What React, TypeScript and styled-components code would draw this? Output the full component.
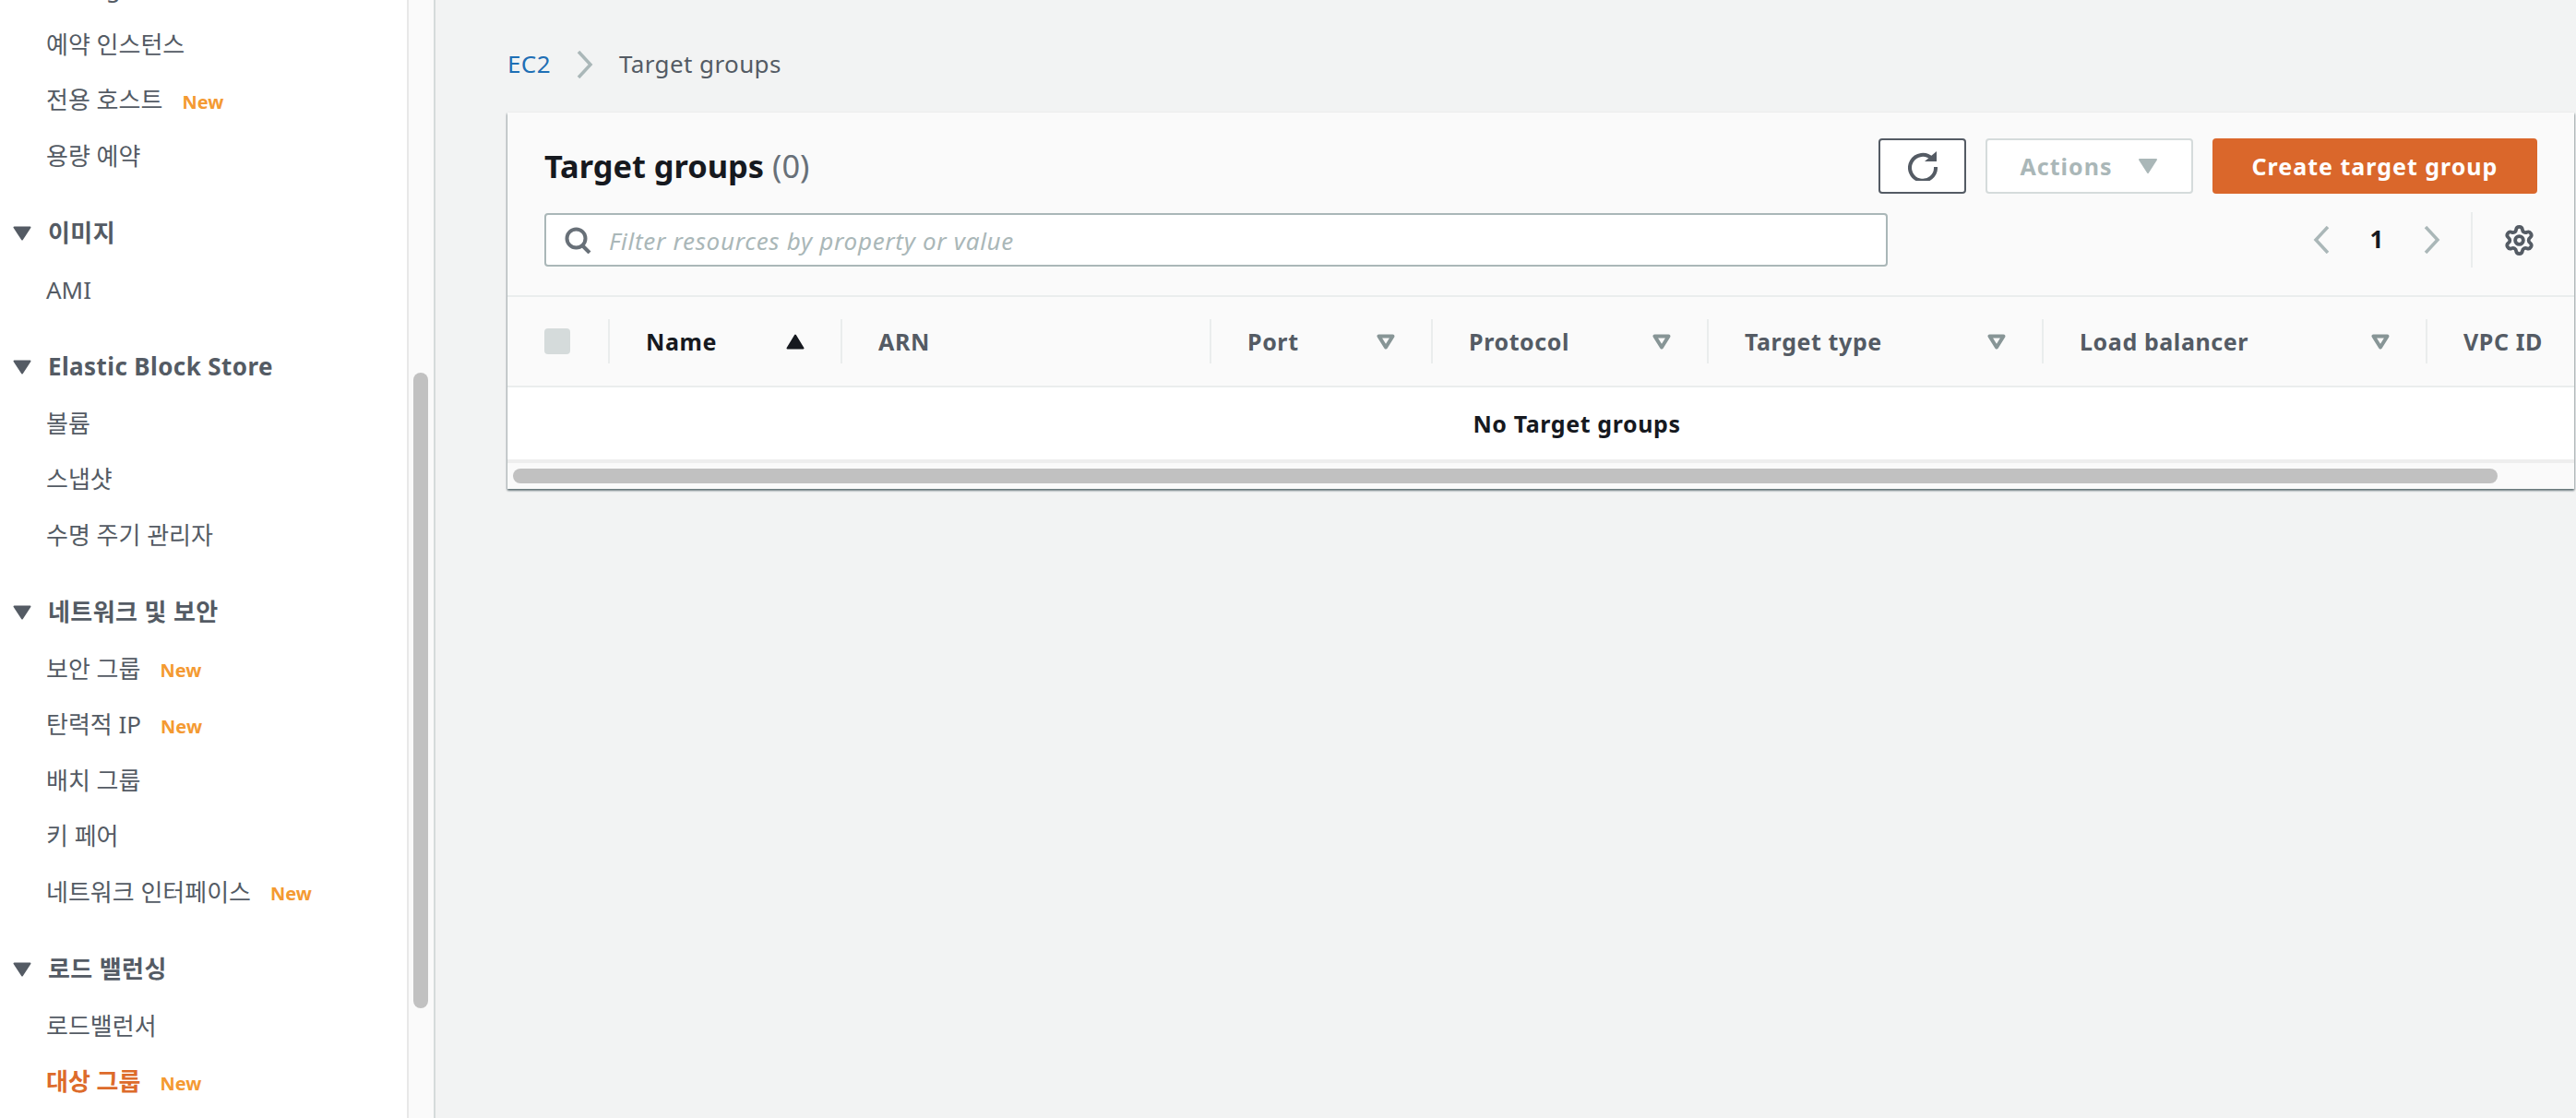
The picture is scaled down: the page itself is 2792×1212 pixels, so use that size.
import styled, { createGlobalStyle } from 'styled-components'
import { Settings } from 'lucide-react'

const GlobalStyle = createGlobalStyle`
  html, body {
    margin: 0;
    padding: 0;
    height: 100%;
    overflow: hidden;
    background: #f2f3f3;
  }
  #root {
    height: 100%;
  }
  * {
    box-sizing: border-box;
  }
`

const FONT = `"Noto Sans", "Noto Sans CJK KR", sans-serif`

const Page = styled.div`
  display: flex;
  height: 100vh;
  font-family: ${FONT};
  font-size: 25px;
  line-height: 1.2;
  color: #545b64;
`

const Sidebar = styled.nav`
  width: 441px;
  flex: none;
  background: #fff;
  overflow: hidden;
`

const NavList = styled.div`
  margin-top: -42.5px;
`

const NavItem = styled.div<{ $active?: boolean }>`
  display: flex;
  align-items: center;
  gap: 21px;
  height: 60.6px;
  padding-left: 50px;
  font-size: 26px;
  white-space: nowrap;
  color: ${({ $active }) => ($active ? '#dd6b2b' : '#545b64')};
  font-weight: ${({ $active }) => ($active ? 700 : 400)};
`

const NavTitle = styled.div`
  display: flex;
  align-items: center;
  gap: 18px;
  height: 62px;
  margin-top: 22.2px;
  padding-left: 14px;
  font-size: 26px;
  font-weight: 700;
  letter-spacing: 0.4px;
  white-space: nowrap;
`

const NewBadge = styled.span`
  font-size: 20px;
  font-weight: 700;
  color: #f49a32;
  margin-top: 4px;
`

const SidebarTrack = styled.div`
  width: 31px;
  flex: none;
  padding: 404px 6px 0 5px;
  background: #fafafa;
  border-left: 2px solid #e8e8e8;
  border-right: 2px solid #d5dbdb;
`

const SidebarThumb = styled.div`
  height: 689px;
  border-radius: 8px;
  background: #c1c1c1;
`

const Main = styled.main`
  flex: 1;
  min-width: 0;
  padding: 46px 2px 0 78px;
`

const Breadcrumb = styled.div`
  display: flex;
  align-items: center;
  height: 48px;
  margin-bottom: 28px;
  font-size: 26px;
  letter-spacing: 0.4px;
`

const CrumbLink = styled.span`
  color: #1f6fb5;
`

const CrumbChevron = styled.svg`
  width: 18px;
  height: 30px;
  margin: 0 28px;
`

const Panel = styled.section`
  background: #fafafa;
  box-shadow: 0 2px 2px 0 rgba(0, 28, 36, 0.45), 1px 1px 2px 0 rgba(0, 28, 36, 0.2),
    -1px 1px 2px 0 rgba(0, 28, 36, 0.2);
`

const PanelHeader = styled.div`
  display: flex;
  flex-direction: column;
  gap: 20px;
  padding: 28px 40px 30px;
`

const HeaderRow = styled.div`
  display: flex;
  align-items: center;
  justify-content: space-between;
`

const Title = styled.h1`
  margin: 0;
  font-size: 34.4px;
  font-weight: 700;
  color: #16191f;

  span {
    font-weight: 400;
    color: #687078;
  }
`

const Actions = styled.div`
  display: flex;
  gap: 21px;
`

const Button = styled.button<{ $width: number }>`
  display: flex;
  align-items: center;
  justify-content: center;
  width: ${({ $width }) => $width}px;
  height: 60px;
  padding: 0;
  border: 2px solid #545b64;
  border-radius: 4px;
  background: #fff;
  font-family: ${FONT};
  font-size: 25px;
  font-weight: 700;
  letter-spacing: 1px;
  color: #545b64;
`

const DisabledButton = styled(Button)`
  gap: 28px;
  border-color: #d5dbdb;
  color: #aab7b8;
`

const PrimaryButton = styled(Button)`
  border: none;
  background: #da672b;
  color: #fff;
`

const FilterInput = styled.label`
  display: flex;
  align-items: center;
  gap: 19px;
  width: 1456px;
  height: 58px;
  padding-left: 20px;
  border: 2px solid #aab7b8;
  border-radius: 4px;
  background: #fff;

  input {
    flex: 1;
    border: none;
    outline: none;
    padding: 2px 0 0;
    background: transparent;
    font-family: ${FONT};
    font-size: 26px;
    font-style: italic;
    letter-spacing: 0.7px;
  }

  input::placeholder {
    color: #aab7b8;
    opacity: 1;
  }
`

const Pager = styled.div`
  display: flex;
  align-items: center;
  height: 60px;
  padding-right: 2px;
`

const PagerCell = styled.div`
  display: flex;
  align-items: center;
  justify-content: center;
  width: 60px;
  font-size: 26px;
  font-weight: 700;
  color: #16191f;
`

const PagerDivider = styled.div`
  width: 2px;
  height: 60px;
  margin: 0 33px 0 12px;
  background: #eaeded;
`

const GearIcon = styled(Settings)`
  display: block;
  color: #545b64;
`

const TableScroll = styled.div`
  overflow: hidden;
  border-top: 2px solid #eaeded;
`

const Table = styled.div`
  width: 2318px;
`

const HeaderCells = styled.div`
  display: grid;
  grid-template-columns: 109px 252px 400px 240px 299px 363px 416px 1fr;
  align-items: center;
  height: 98px;
  border-bottom: 2px solid #eaeded;
`

const CheckCell = styled.div`
  padding-left: 40px;
`

const CheckBox = styled.div`
  width: 28px;
  height: 28px;
  border-radius: 4px;
  background: #d5dbdb;
`

const HeadCell = styled.div<{ $sorted?: boolean }>`
  display: flex;
  align-items: center;
  justify-content: space-between;
  height: 48px;
  padding: 0 39px 0 39px;
  border-left: 2px solid #eaeded;
  font-weight: 700;
  letter-spacing: 0.6px;
  white-space: nowrap;
  color: ${({ $sorted }) => ($sorted ? '#16191f' : '#545b64')};
`

const EmptyRow = styled.div`
  display: flex;
  align-items: center;
  justify-content: center;
  height: 78px;
  background: #fff;
  font-weight: 700;
  letter-spacing: 0.6px;
  color: #16191f;
`

const ScrollArea = styled.div`
  height: 32px;
  padding: 6px 83px 6px 6px;
  border-top: 4px solid #eeeeee;
`

const ScrollThumb = styled.div`
  height: 16px;
  border-radius: 8px;
  background: #c1c1c1;
`

const Caret = () => (
  <svg width="20" height="16" viewBox="0 0 20 16">
    <path d="M1.5 1.5 H18.5 L10 14.5 Z" fill="#545b64" stroke="#545b64" strokeWidth="2" strokeLinejoin="round" />
  </svg>
)

const SortUp = () => (
  <svg width="20" height="17" viewBox="0 0 20 17">
    <path d="M10 1.5 L18.5 15.5 H1.5 Z" fill="#16191f" stroke="#16191f" strokeWidth="2" strokeLinejoin="round" />
  </svg>
)

const FilterCaret = () => (
  <svg width="20" height="17" viewBox="0 0 20 17">
    <path d="M2.5 2.5 H17.5 L10 14.5 Z" fill="none" stroke="#879596" strokeWidth="4" strokeLinejoin="round" />
  </svg>
)

const Chevron = ({ left }: { left?: boolean }) => (
  <svg width="18" height="30" viewBox="0 0 18 30">
    <path d={left ? 'M16 1 L3 15 L16 29' : 'M2 1 L15 15 L2 29'} fill="none" stroke="#aab7b8" strokeWidth="3.5" />
  </svg>
)

const SearchIcon = () => (
  <svg width="29" height="29" viewBox="0 0 29 29">
    <circle cx="12.5" cy="12.5" r="10" fill="none" stroke="#687078" strokeWidth="4" />
    <path d="M19 20 L27 28" fill="none" stroke="#687078" strokeWidth="4" />
  </svg>
)

const RefreshIcon = () => (
  <svg width="32" height="32" viewBox="0 0 32 32">
    <path d="M26 8 A14 14 0 1 0 30 17" fill="none" stroke="#545b64" strokeWidth="4" />
    <path d="M18 11 L31 11 L31 0 Z" fill="#545b64" />
  </svg>
)

type NavEntry = { label: string; isNew?: boolean; active?: boolean }

const NAV: { title?: string; items: NavEntry[] }[] = [
  {
    items: [{ label: 'Savings Plans' }, { label: '예약 인스턴스' }, { label: '전용 호스트', isNew: true }, { label: '용량 예약' }],
  },
  { title: '이미지', items: [{ label: 'AMI' }] },
  { title: 'Elastic Block Store', items: [{ label: '볼륨' }, { label: '스냅샷' }, { label: '수명 주기 관리자' }] },
  {
    title: '네트워크 및 보안',
    items: [
      { label: '보안 그룹', isNew: true },
      { label: '탄력적 IP', isNew: true },
      { label: '배치 그룹' },
      { label: '키 페어' },
      { label: '네트워크 인터페이스', isNew: true },
    ],
  },
  { title: '로드 밸런싱', items: [{ label: '로드밸런서' }, { label: '대상 그룹', isNew: true, active: true }] },
]

const COLUMNS = ['ARN', 'Port', 'Protocol', 'Target type', 'Load balancer', 'VPC ID']

const App = () => {
  return (
    <Page>
      <GlobalStyle />
      <Sidebar>
        <NavList>
          {NAV.map((group, i) => (
            <div key={i}>
              {group.title && (
                <NavTitle>
                  <Caret />
                  {group.title}
                </NavTitle>
              )}
              {group.items.map((item) => (
                <NavItem key={item.label} $active={item.active}>
                  {item.label}
                  {item.isNew && <NewBadge>New</NewBadge>}
                </NavItem>
              ))}
            </div>
          ))}
        </NavList>
      </Sidebar>
      <SidebarTrack>
        <SidebarThumb />
      </SidebarTrack>
      <Main>
        <Breadcrumb>
          <CrumbLink>EC2</CrumbLink>
          <CrumbChevron viewBox="0 0 18 30">
            <path d="M2 1 L15 15 L2 29" fill="none" stroke="#aab7b8" strokeWidth="3.5" />
          </CrumbChevron>
          <span>Target groups</span>
        </Breadcrumb>
        <Panel>
          <PanelHeader>
            <HeaderRow>
              <Title>
                Target groups <span>(0)</span>
              </Title>
              <Actions>
                <Button $width={95}>
                  <RefreshIcon />
                </Button>
                <DisabledButton $width={225}>
                  Actions
                  <svg width="22" height="18" viewBox="0 0 22 18">
                    <path d="M2 2 H20 L11 16 Z" fill="#aab7b8" stroke="#aab7b8" strokeWidth="2" strokeLinejoin="round" />
                  </svg>
                </DisabledButton>
                <PrimaryButton $width={352}>Create target group</PrimaryButton>
              </Actions>
            </HeaderRow>
            <HeaderRow>
              <FilterInput>
                <SearchIcon />
                <input placeholder="Filter resources by property or value" />
              </FilterInput>
              <Pager>
                <PagerCell>
                  <Chevron left />
                </PagerCell>
                <PagerCell>1</PagerCell>
                <PagerCell>
                  <Chevron />
                </PagerCell>
                <PagerDivider />
                <GearIcon size={35} strokeWidth={2.6} />
              </Pager>
            </HeaderRow>
          </PanelHeader>
          <TableScroll>
            <Table>
              <HeaderCells>
                <CheckCell>
                  <CheckBox />
                </CheckCell>
                <HeadCell $sorted>
                  Name
                  <SortUp />
                </HeadCell>
                {COLUMNS.map((col) => (
                  <HeadCell key={col}>
                    {col}
                    {col !== 'ARN' && col !== 'VPC ID' && <FilterCaret />}
                  </HeadCell>
                ))}
              </HeaderCells>
              <EmptyRow>No Target groups</EmptyRow>
            </Table>
          </TableScroll>
          <ScrollArea>
            <ScrollThumb />
          </ScrollArea>
        </Panel>
      </Main>
    </Page>
  )
}

export default App
